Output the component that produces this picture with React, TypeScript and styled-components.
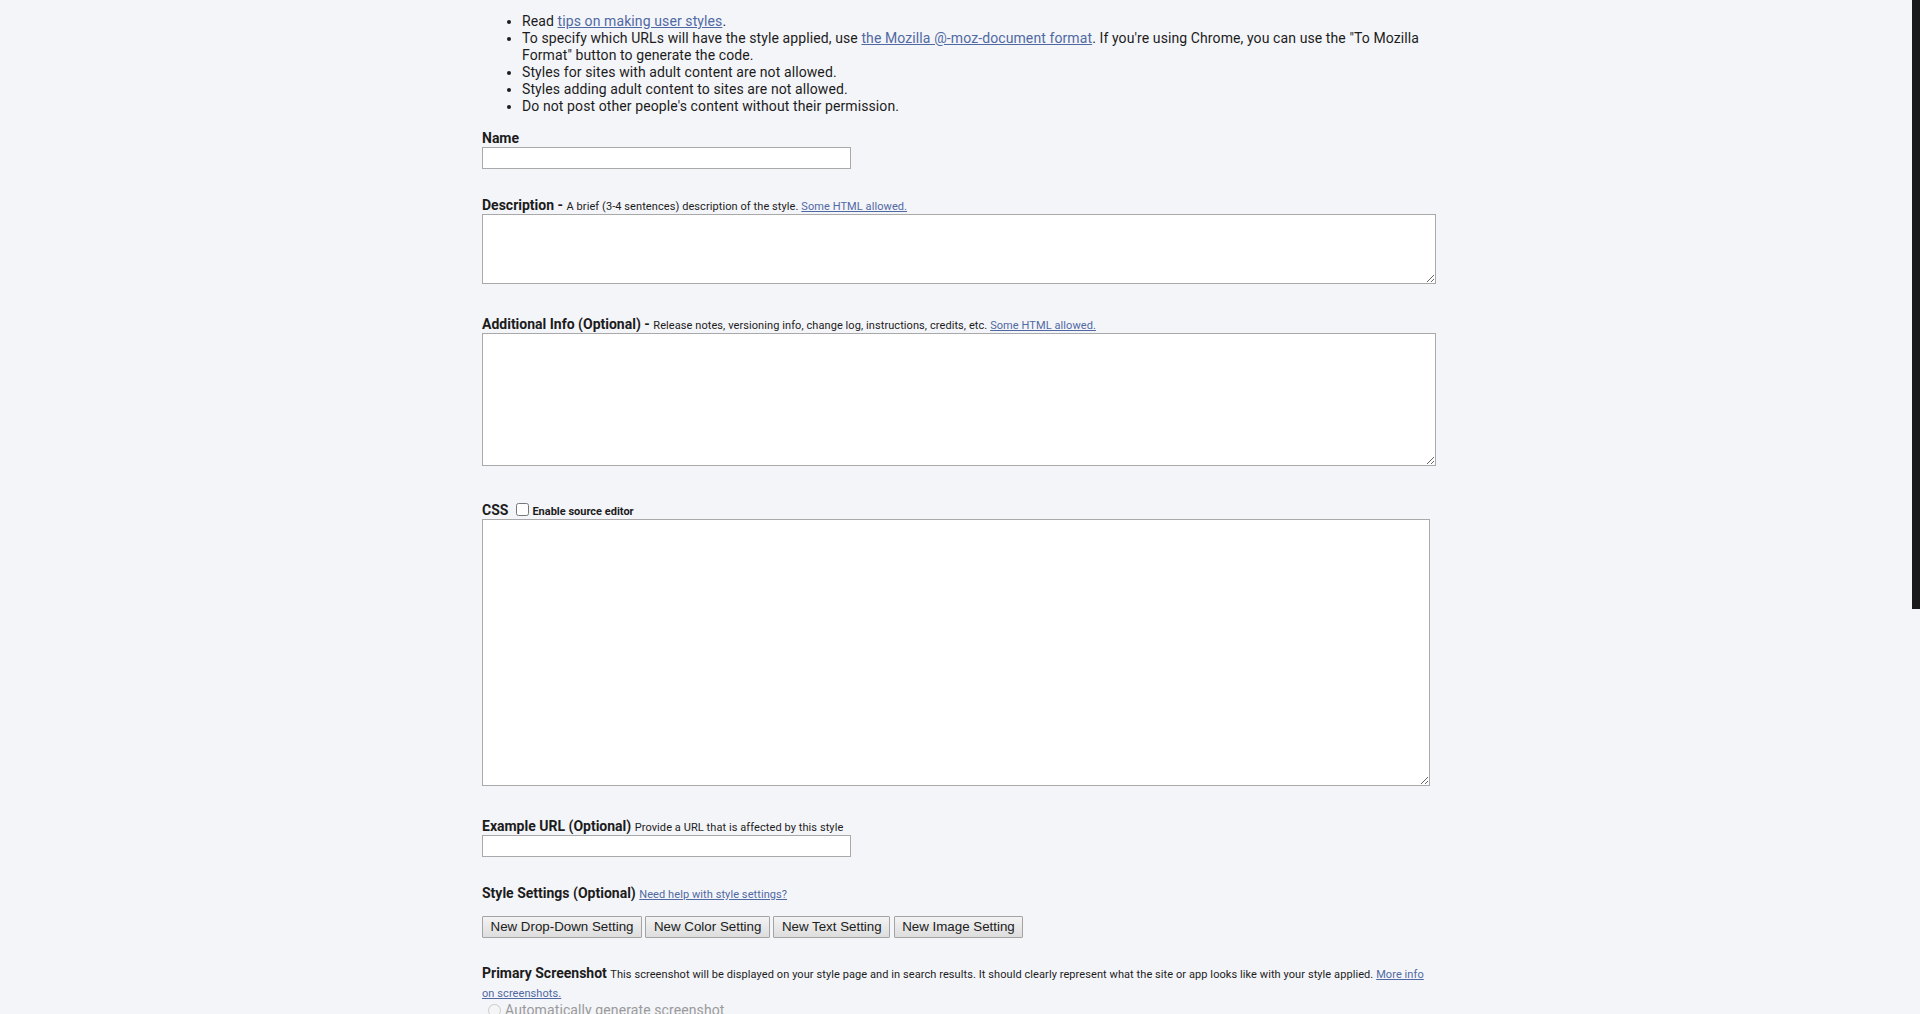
import React from "react";
import styled, { createGlobalStyle } from "styled-components";

const GlobalStyle = createGlobalStyle`
	html,
	body {
		margin: 0;
		padding: 0;
		background: #f4f5f9;
	}
	body {
		font-family: Roboto, "Liberation Sans", Arial, sans-serif;
		font-size: 14px;
		color: #1c1c1c;
		overflow: hidden;
	}
`;

const Page = styled.div`
	width: 956px;
	margin: 0 auto;
	padding-top: 13px;
`;

const Tips = styled.ul`
	margin: 0;
	padding: 0 0 0 40px;
	line-height: 17px;
	font-size: 14px;
	letter-spacing: 0.1px;
`;

const Link = styled.a`
	color: #5069a3;
	text-decoration: underline;
	cursor: pointer;
`;

const Field = styled.div<{ $gap: number }>`
	margin-top: ${(p) => p.$gap}px;
	width: 954px;
`;

const Label = styled.div`
	height: 18px;
	font-size: 14px;
	font-weight: 700;
	line-height: 18px;
	white-space: nowrap;
`;

const Hint = styled.span`
	font-size: 11px;
	font-weight: 400;
	letter-spacing: 0.08px;
`;

const Paragraph = styled.div`
	font-size: 14px;
	line-height: 17.5px;
`;

const Strong = styled.span`
	font-weight: 700;
`;

const TextInput = styled.input`
	display: block;
	box-sizing: border-box;
	width: 369px;
	height: 22px;
	margin: 0;
	border: 1px solid #a9a9a9;
	border-radius: 0;
	background: #fff;
	padding: 1px 4px;
	font: 14px Roboto, sans-serif;
`;

const TextArea = styled.textarea<{ $w: number; $h: number }>`
	display: block;
	box-sizing: border-box;
	width: ${(p) => p.$w}px;
	height: ${(p) => p.$h}px;
	margin: 0;
	border: 1px solid #a9a9a9;
	border-radius: 0;
	background: #fff;
	padding: 2px;
	font: 13px "DejaVu Sans Mono", monospace;
`;

const Check = styled.input`
	width: 13px;
	height: 13px;
	margin: 0 3px 0 8px;
	vertical-align: -1px;
`;

const SmallBold = styled.span`
	font-size: 11px;
	font-weight: 700;
`;

const ButtonRow = styled.div`
	display: flex;
	gap: 3.5px;
	margin-top: 14px;
`;

const Button = styled.button`
	box-sizing: border-box;
	height: 22px;
	padding: 0 7.5px;
	margin: 0;
	border: 1px solid #a4a4a4;
	border-radius: 1px;
	background: linear-gradient(#f3f3f3, #dddddd);
	font: 13.333px "Liberation Sans", Arial, sans-serif;
	color: #202020;
	line-height: 20px;
`;

const RadioRow = styled.label`
	display: flex;
	align-items: center;
	color: #9a9a9a;
	font-size: 14px;
	line-height: 18px;
	letter-spacing: 0.1px;
	margin-top: -1px;
`;

const Radio = styled.input`
	width: 13px;
	height: 13px;
	margin: 0 4px 0 6px;
`;

const ScrollThumb = styled.div`
	position: fixed;
	top: 0;
	right: 0;
	width: 8px;
	height: 609px;
	background: #1a1a1a;
`;

const App = () => {
	return (
		<>
			<GlobalStyle />
			<Page>
				<Tips>
					<li>
						Read <Link>tips on making user styles</Link>.
					</li>
					<li>
						To specify which URLs will have the style applied, use{" "}
						<Link>the Mozilla @-moz-document format</Link>. If you're using Chrome, you
						can use the "To Mozilla Format" button to generate the code.
					</li>
					<li>Styles for sites with adult content are not allowed.</li>
					<li>Styles adding adult content to sites are not allowed.</li>
					<li>Do not post other people's content without their permission.</li>
				</Tips>

				<Field $gap={14}>
					<Label>Name</Label>
					<TextInput type="text" />
				</Field>

				<Field $gap={27}>
					<Label>
						{"Description - "}
						<Hint>
							A brief (3-4 sentences) description of the style.{" "}
							<Link>Some HTML allowed.</Link>
						</Hint>
					</Label>
					<TextArea $w={954} $h={70} />
				</Field>

				<Field $gap={31}>
					<Label>
						{"Additional Info (Optional) - "}
						<Hint>
							Release notes, versioning info, change log, instructions, credits, etc.{" "}
							<Link>Some HTML allowed.</Link>
						</Hint>
					</Label>
					<TextArea $w={954} $h={133} />
				</Field>

				<Field $gap={35}>
					<Label>
						CSS
						<Check type="checkbox" />
						<SmallBold>Enable source editor</SmallBold>
					</Label>
					<TextArea $w={948} $h={267} />
				</Field>

				<Field $gap={31}>
					<Label>
						{"Example URL (Optional) "}
						<Hint>Provide a URL that is affected by this style</Hint>
					</Label>
					<TextInput type="text" />
				</Field>

				<Field $gap={27}>
					<Label>
						{"Style Settings (Optional) "}
						<Hint>
							<Link>Need help with style settings?</Link>
						</Hint>
					</Label>
					<ButtonRow>
						<Button>New Drop-Down Setting</Button>
						<Button>New Color Setting</Button>
						<Button>New Text Setting</Button>
						<Button>New Image Setting</Button>
					</ButtonRow>
				</Field>

				<Field $gap={27}>
					<Paragraph>
						<Strong>Primary Screenshot</Strong>{" "}
						<Hint>
							This screenshot will be displayed on your style page and in search
							results. It should clearly represent what the site or app looks like
							with your style applied. <Link>More info on screenshots.</Link>
						</Hint>
					</Paragraph>
					<RadioRow>
						<Radio type="radio" name="shot" disabled />
						Automatically generate screenshot
					</RadioRow>
				</Field>
			</Page>
			<ScrollThumb />
		</>
	);
};

export default App;
